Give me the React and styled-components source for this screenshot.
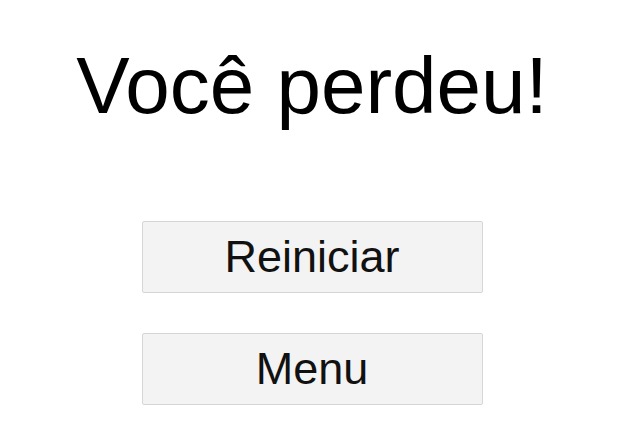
import styled, { createGlobalStyle } from "styled-components";

const GlobalStyle = createGlobalStyle`
    html, body {
        margin: 0;
        padding: 0;
        background: #ffffff;
        font-family: "Liberation Sans", Arial, sans-serif;
    }
`

const Screen = styled.main`
    width: 624px;
    height: 430px;
    display: flex;
    flex-direction: column;
    align-items: center;
    padding-top: 46px;
    box-sizing: border-box;
`

const Title = styled.h1`
    margin: 0 0 95px 0;
    font-size: 80px;
    line-height: 1;
    font-weight: 400;
    color: #000;
`

const Options = styled.nav`
    display: flex;
    flex-direction: column;
    gap: 40px;
`

const OptionButton = styled.button`
    width: 341px;
    height: 72px;
    display: flex;
    align-items: center;
    justify-content: center;
    background-color: #f3f3f3;
    border: 1px solid #d6d6d6;
    border-radius: 2px;
    font-family: "Liberation Sans", Arial, sans-serif;
    font-size: 45px;
    color: #111;
    padding: 0;
    cursor: pointer;
`

export default function App() {
    return (
        <>
            <GlobalStyle />
            <Screen>
                <Title>Você perdeu!</Title>
                <Options>
                    <OptionButton>Reiniciar</OptionButton>
                    <OptionButton>Menu</OptionButton>
                </Options>
            </Screen>
        </>
    )
}
